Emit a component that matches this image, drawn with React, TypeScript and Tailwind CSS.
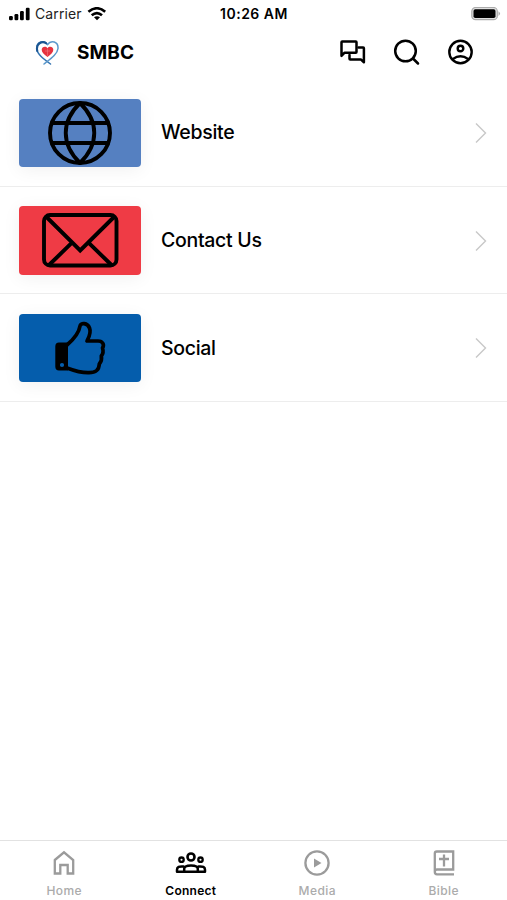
import type { ReactNode } from 'react';

const stroke = {
  fill: 'none',
  stroke: 'currentColor',
  strokeLinejoin: 'round' as const,
  strokeLinecap: 'round' as const,
};

function StatusBar() {
  return (
    <div className="grid h-7 grid-cols-3 items-center pl-2 pr-[6px]">
      <div className="flex items-center">
        <svg width="23" height="14" viewBox="0 0 23 14" fill="currentColor">
          <rect x="1" y="9" width="3.800" height="4.200" rx="1.200" />
          <rect x="6.500" y="7" width="3.800" height="6.200" rx="1.200" />
          <rect x="12" y="4" width="3.800" height="9.200" rx="1.200" />
          <rect x="17.800" y="0.800" width="3.800" height="12.400" rx="1.200" />
        </svg>
        <span className="ml-[4px] text-[14px] leading-7 tracking-[0.1px] text-[#222]">Carrier</span>
        <svg className="ml-[5px]" width="20" height="14" viewBox="0 0 20 14" fill="none" stroke="currentColor" strokeWidth="2.6">
          <path d="M1.400 4.800Q10 -2.300 18.200 4.800" />
          <path d="M4.700 8.300Q10 3.800 15 8.300" />
          <path d="M10 13.200L7 10.300Q10 8 13 10.300Z" fill="currentColor" stroke="none" />
        </svg>
      </div>
      <div className="-ml-[5px] -mr-1 whitespace-nowrap text-center text-[14px] font-semibold leading-7 tracking-[0.500px]">10:26 AM</div>
      <svg className="justify-self-end" width="31" height="14" viewBox="0 0 31 14">
        <rect x="1.800" y="0.500" width="25.500" height="12.200" rx="3.800" fill="#e0e0e0" stroke="#ababab" strokeWidth="1.200" />
        <rect x="3.500" y="2.200" width="22" height="8.800" rx="1.800" />
        <path d="M28.500 4.300Q31.500 6.600 28.500 8.900Z" fill="#aaa" />
      </svg>
    </div>
  );
}

function HeartLogo() {
  return (
    <svg width="24" height="26" viewBox="0 0 24 26" fill="none" strokeLinecap="round">
      <path d="M12.500 4.500C9-.5 1.500 1.500 1.700 8.500C2 14 8 18.500 15.500 24" stroke="#3272b0" strokeWidth="1.500" />
      <path d="M2.300 11C.5 4 7 .5 11 3.200" stroke="#1b5692" strokeWidth="2.100" />
      <path d="M12.500 4.500C16-.5 23.500 1.500 23 8.500C22.500 14 16 18.500 9 24" stroke="#5b98cb" strokeWidth="1.500" />
      <path d="M12.500 17C8.700 14.300 6.700 12 6.700 9.700c0-3 4-4 5.800-1.400 1.800-2.600 5.800-1.600 5.800 1.400 0 2.300-2 4.600-5.800 7.300Z" fill="#e6323f" />
      <path d="M12.500 9v6.500M10.300 11h4.400" stroke="#f07880" strokeWidth=".6" />
    </svg>
  );
}

function Header() {
  return (
    <header className="flex h-[51px] items-center pl-[35px] pr-[32px]">
      <div className="flex flex-1 items-center pb-[2px]">
        <HeartLogo />
        <h1 className="ml-[18px] pt-[2px] text-[19px] font-bold tracking-[0.1px]">SMBC</h1>
      </div>
      <div className="flex items-center gap-[26px] pb-[3px]">
        <svg width="28" height="28" viewBox="0 0 28 28" {...stroke} strokeWidth="2.500">
          <path d="M2.500 17.800V4.200Q2.500 3.500 3.200 3.500H16.800Q17.500 3.500 17.500 4.200V14Q17.500 14.700 16.800 14.700H5.600Z" />
          <path d="M19.500 9.500H24.200Q24.900 9.500 24.900 10.200V24.200L21.800 21.400H11.200Q10.500 21.400 10.500 20.700V17" />
        </svg>
        <svg width="28" height="28" viewBox="0 0 28 28" {...stroke} strokeWidth="2.500">
          <circle cx="12.500" cy="13" r="10.300" />
          <path d="M20 20.500L25 25.500" />
        </svg>
        <svg width="28" height="28" viewBox="0 0 28 28" {...stroke} strokeWidth="2.400">
          <circle cx="13.500" cy="14" r="11.200" />
          <circle cx="13.500" cy="10.500" r="2.800" />
          <path d="M5.900 21Q13.500 15.600 21.100 21" />
        </svg>
      </div>
    </header>
  );
}

function Globe() {
  return (
    <svg width="122" height="69" viewBox="0 0 122 69" {...stroke} strokeWidth="3.900">
      <circle cx="61" cy="34" r="30" />
      <path d="M33 24H89M33 44H89M61 4C42 22.500 42 45.500 61 64M61 4C80 22.500 80 45.500 61 64" />
    </svg>
  );
}

function Envelope() {
  return (
    <svg width="122" height="69" viewBox="0 0 122 69" {...stroke} strokeWidth="3.900" strokeLinecap="butt" strokeLinejoin="miter">
      <rect x="25" y="9" width="72.500" height="50.500" rx="6" />
      <path d="M27 10.500L61.200 44.500L95.500 10.500M30 59L53 36.700M92.500 59L69.500 36.700" />
    </svg>
  );
}

function Thumb() {
  return (
    <svg width="122" height="69" viewBox="0 0 122 69" {...stroke} strokeWidth="3.700">
      <path d="M48 31C55 25 60 19 61 12C61.500 8.500 68.500 8.700 70.500 14C72.500 19 69.500 24 68 27H79C84 27 85.500 31 83.500 34C84.500 37 84 40 82.300 42C83 45 82 48 80.300 50C80 57 76 58.700 70 58.700C62 59 56 57 48 54" />
      <path fillRule="evenodd" d="M40 28.500H49V56.500H40Q36.300 56.500 36.300 52.500V32.500Q36.300 28.500 40 28.500ZM43 48.900A2.100 2.100 0 1 0 43 53.100A2.100 2.100 0 1 0 43 48.900Z" fill="currentColor" stroke="none" />
    </svg>
  );
}

function Row({ label, color, children }: { label: string; color: string; children: ReactNode }) {
  return (
    <li className="flex h-[107.600px] items-center border-b border-[#ededed] px-[19px] pt-[1.400px]">
      <div className={`h-[68.500px] w-[122px] overflow-hidden rounded-[4px] shadow-[0_3px_18px_rgba(0,0,0,0.06)] ${color}`}>
        {children}
      </div>
      <span className="ml-5 flex-1 text-[19.500px] font-medium tracking-[-0.300px]">{label}</span>
      <svg width="14" height="22" viewBox="0 0 14 22" fill="none" stroke="#c8c8c8" strokeWidth="1.400">
        <path d="M2 1.500L11.500 11L2 20.500" />
      </svg>
    </li>
  );
}

function Tab({ label, active, children }: { label: string; active?: boolean; children: ReactNode }) {
  return (
    <div className={`flex flex-col items-center pt-[7px] ${active ? 'text-black' : 'text-[#9b9b9b]'}`}>
      <svg width="34" height="30" viewBox="0 0 34 30" {...stroke} strokeWidth="2.300">
        {children}
      </svg>
      <span className={`mt-[5px] text-[12px] leading-4 ${active ? 'font-semibold tracking-[0.250px]' : 'font-medium tracking-[0.400px] text-[#ababab]'}`}>
        {label}
      </span>
    </div>
  );
}

export default function App() {
  return (
    <div className="flex h-[900px] w-[507px] flex-col overflow-hidden bg-white font-['Inter','Liberation_Sans',sans-serif] text-black">
      <StatusBar />
      <Header />
      <ul className="flex-1">
        <Row label="Website" color="bg-[#5580c1]"><Globe /></Row>
        <Row label="Contact Us" color="bg-[#ef3b45]"><Envelope /></Row>
        <Row label="Social" color="bg-[#055dac]"><Thumb /></Row>
      </ul>
      <nav className="grid h-[60px] grid-cols-4 border-t-[1.500px] border-[#e2e2e2] pl-[1px]">
        <Tab label="Home">
          <path strokeLinejoin="miter" d="M7.800 12L17 4.300L26.200 12V25.500H20.700V17H13.300V25.500H7.800Z" />
        </Tab>
        <Tab label="Connect" active>
          <circle cx="17" cy="9" r="3.500" strokeWidth="2.600" />
          <circle cx="7.500" cy="11.700" r="2.200" />
          <circle cx="26.500" cy="11.700" r="2.200" />
          <path strokeWidth="2.500" d="M10.200 23.800V20.800Q10.200 17.500 17 17.500Q23.800 17.500 23.800 20.800V23.800M9.500 18.500Q3 17.800 3 21.800V23.800H31V21.800Q31 17.800 24.500 18.500" />
        </Tab>
        <Tab label="Media">
          <circle cx="17" cy="15" r="11.600" />
          <path d="M14 10.500L21.500 15L14 19.500Z" fill="currentColor" stroke="none" />
        </Tab>
        <Tab label="Bible">
          <path strokeLinecap="butt" strokeLinejoin="miter" d="M27 26.300H10Q7.800 26.300 7.800 24V5.500Q7.800 3.500 9.800 3.500H26.200V21.500H10Q7.800 21.500 7.800 24M17 6.500V18.500M12 11H22" />
        </Tab>
      </nav>
    </div>
  );
}
